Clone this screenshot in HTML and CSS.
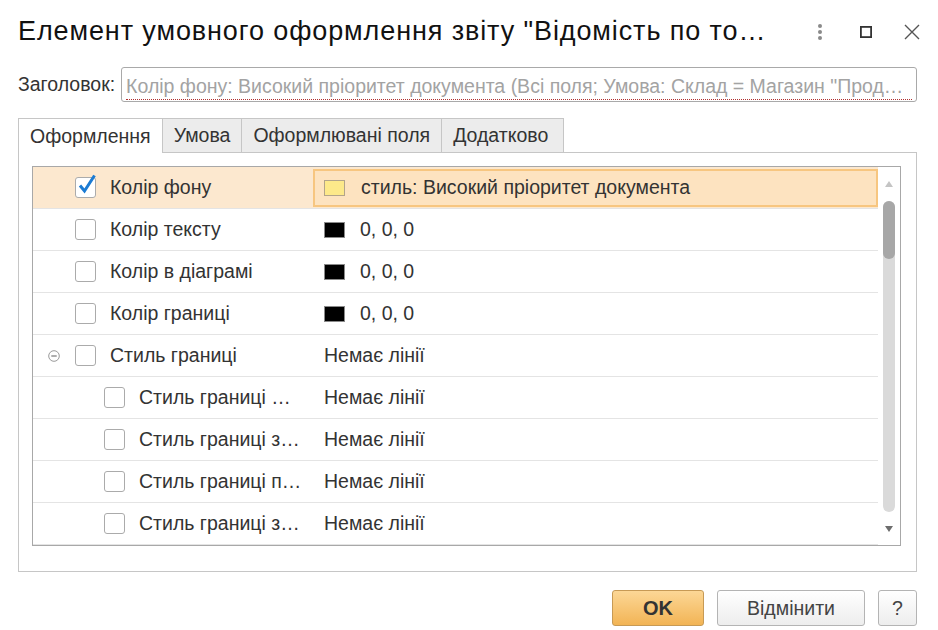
FILE: index.html
```html
<!DOCTYPE html>
<html lang="uk">
<head>
    <meta charset="UTF-8">
    <meta name="viewport" content="width=device-width, initial-scale=1.0">
    <title>Елемент умовного оформлення</title>
    <link rel="stylesheet" href="styles.css">
</head>
<body>
    <div class="dialog">
        <!-- Заголовок вікна -->
        <div class="titlebar">
            <h1 class="title">Елемент умовного оформлення звіту "Відомість по то…</h1>
            <div class="window-buttons">
                <span class="win-btn">
                    <svg width="6" height="18" viewBox="0 0 6 18"><circle cx="3" cy="3" r="2" fill="#8a8a8a"/><circle cx="3" cy="9" r="2" fill="#8a8a8a"/><circle cx="3" cy="15" r="2" fill="#8a8a8a"/></svg>
                </span>
                <span class="win-btn">
                    <svg width="12" height="12" viewBox="0 0 12 12"><rect x="0.9" y="0.9" width="10.2" height="10.2" fill="none" stroke="#333" stroke-width="1.8"/></svg>
                </span>
                <span class="win-btn">
                    <svg width="16" height="16" viewBox="0 0 16 16"><path d="M1 1 L15 15 M15 1 L1 15" stroke="#555" stroke-width="1.4"/></svg>
                </span>
            </div>
        </div>

        <div class="caption-row">
            <label class="caption-label">Заголовок:</label>
            <div class="caption-input">
                <span class="caption-text">Колір фону: Високий пріоритет документа (Всі поля; Умова: Склад = Магазин "Прод…</span>
            </div>
        </div>

        <!-- Вкладки -->
        <div class="tabs">
            <div class="tab active">Оформлення</div>
            <div class="tab">Умова</div>
            <div class="tab">Оформлювані поля</div>
            <div class="tab">Додатково</div>
        </div>

        <div class="tab-panel">
            <div class="grid">
                <div class="rows">
                    <div class="row current">
                        <div class="cell-name">
                            <span class="toggle"></span>
                            <span class="checkbox checked">
                                <svg width="24" height="24" viewBox="0 0 24 24"><path d="M5 11.5 L9.5 17 L19.5 1.5" fill="none" stroke="#1b7bd3" stroke-width="3"/></svg>
                            </span>
                            <span class="name-text">Колір фону</span>
                        </div>
                        <div class="cell-value selected">
                            <span class="swatch yellow"></span>стиль: Високий пріоритет документа
                        </div>
                    </div>
                    <div class="row">
                        <div class="cell-name">
                            <span class="toggle"></span>
                            <span class="checkbox"></span>
                            <span class="name-text">Колір тексту</span>
                        </div>
                        <div class="cell-value"><span class="swatch"></span>0, 0, 0</div>
                    </div>
                    <div class="row">
                        <div class="cell-name">
                            <span class="toggle"></span>
                            <span class="checkbox"></span>
                            <span class="name-text">Колір в діаграмі</span>
                        </div>
                        <div class="cell-value"><span class="swatch"></span>0, 0, 0</div>
                    </div>
                    <div class="row">
                        <div class="cell-name">
                            <span class="toggle"></span>
                            <span class="checkbox"></span>
                            <span class="name-text">Колір границі</span>
                        </div>
                        <div class="cell-value"><span class="swatch"></span>0, 0, 0</div>
                    </div>
                    <div class="row">
                        <div class="cell-name">
                            <span class="toggle">
                                <svg width="12" height="12" viewBox="0 0 12 12"><circle cx="6" cy="6" r="5.3" fill="none" stroke="#9a9a9a" stroke-width="1"/><path d="M3.3 6 H8.7" stroke="#777" stroke-width="1.2"/></svg>
                            </span>
                            <span class="checkbox"></span>
                            <span class="name-text">Стиль границі</span>
                        </div>
                        <div class="cell-value">Немає лінії</div>
                    </div>
                    <div class="row sub">
                        <div class="cell-name">
                            <span class="toggle"></span>
                            <span class="checkbox"></span>
                            <span class="name-text">Стиль границі …</span>
                        </div>
                        <div class="cell-value">Немає лінії</div>
                    </div>
                    <div class="row sub">
                        <div class="cell-name">
                            <span class="toggle"></span>
                            <span class="checkbox"></span>
                            <span class="name-text">Стиль границі з…</span>
                        </div>
                        <div class="cell-value">Немає лінії</div>
                    </div>
                    <div class="row sub">
                        <div class="cell-name">
                            <span class="toggle"></span>
                            <span class="checkbox"></span>
                            <span class="name-text">Стиль границі п…</span>
                        </div>
                        <div class="cell-value">Немає лінії</div>
                    </div>
                    <div class="row sub">
                        <div class="cell-name">
                            <span class="toggle"></span>
                            <span class="checkbox"></span>
                            <span class="name-text">Стиль границі з…</span>
                        </div>
                        <div class="cell-value">Немає лінії</div>
                    </div>
                </div>
                <!-- Смуга прокрутки -->
                <div class="scrollbar">
                    <div class="scroll-arrow up"></div>
                    <div class="scroll-track"><div class="scroll-thumb"></div></div>
                    <div class="scroll-arrow down"></div>
                </div>
            </div>
        </div>

        <div class="footer">
            <button class="btn btn-default">OK</button>
            <button class="btn btn-cancel">Відмінити</button>
            <button class="btn btn-help">?</button>
        </div>
    </div>
</body>
</html>
```

FILE: styles.css
```css
body {
    margin: 0;
    background-color: #fff;
    font-family: 'Liberation Sans', Arial, sans-serif;
    font-size: 19.5px;
    color: #333;
}
.dialog {
    width: 938px;
    height: 630px;
    padding: 0 21px 0 18px;
    box-sizing: border-box;
}

/* Title bar */
.titlebar {
    height: 64px;
    display: flex;
    align-items: center;
    margin-right: -7px;
}
.title {
    margin: 0;
    font-size: 27px;
    letter-spacing: 0.9px;
    font-weight: normal;
    color: #111;
    white-space: nowrap;
    padding-bottom: 2px;
}
.window-buttons {
    margin-left: auto;
    display: flex;
    gap: 22px;
}
.win-btn {
    width: 24px;
    height: 24px;
    display: flex;
    align-items: center;
    justify-content: center;
}

/* Caption field */
.caption-row {
    display: flex;
    align-items: center;
    margin-top: 3px;
    gap: 6px;
}
.caption-label {
    color: #333;
}
.caption-input {
    flex: 1;
    height: 35px;
    border: 1px solid #a9a9a9;
    border-radius: 3px;
    box-sizing: border-box;
    padding: 0 4px;
    display: flex;
    align-items: center;
    overflow: hidden;
}
.caption-text {
    flex: 1;
    color: #a3a3a3;
    white-space: nowrap;
    overflow: hidden;
    line-height: 26px;
    border-bottom: 1px dotted #b03030;
    margin-top: 4px;
}

/* Tabs */
.tabs {
    display: flex;
    margin-top: 16px;
    margin-bottom: -1px;
}
.tab {
    height: 33px;
    padding: 0 11px;
    display: flex;
    align-items: center;
    border: 1px solid #c6c6c6;
    border-bottom: none;
    background-color: #ececec;
    margin-left: -1px;
    color: #333;
}
.tab:first-child {
    margin-left: 0;
}
.tab:last-child {
    padding-right: 15px;
}
.tab.active {
    background-color: #fff;
    height: 34px;
    position: relative;
    z-index: 1;
}

.tab-panel {
    border: 1px solid #c6c6c6;
    padding: 13px 15px 25px 13px;
}

/* Grid */
.grid {
    border: 1px solid #a8a8a8;
    display: flex;
    height: 378px;
    overflow: hidden;
}
.rows {
    flex: 1;
}
.row {
    height: 41px;
    border-bottom: 1px solid #e4e4e4;
    display: flex;
    align-items: center;
}
.row.current {
    background-color: #fce8cf;
}
.cell-name {
    width: 280px;
    flex-shrink: 0;
    display: flex;
    align-items: center;
    padding-left: 15px;
    box-sizing: border-box;
    white-space: nowrap;
}
.row.sub .cell-name {
    padding-left: 44px;
}
.toggle {
    width: 12px;
    height: 12px;
    display: flex;
    margin-right: 15px;
}
.checkbox {
    width: 21px;
    height: 21px;
    border: 1px solid #ababab;
    border-radius: 3px;
    box-sizing: border-box;
    background-color: #fff;
    margin-right: 14px;
    flex-shrink: 0;
    position: relative;
}
.checkbox svg {
    position: absolute;
    left: -1px;
    top: -4px;
}
.cell-value {
    flex: 1;
    display: flex;
    align-items: center;
    padding-left: 11px;
    white-space: nowrap;
}
.cell-value.selected {
    height: 38px;
    box-sizing: border-box;
    border: 2px solid #f7c680;
    background-color: #fde3c0;
    padding-left: 9px;
}
.swatch {
    width: 21px;
    height: 16px;
    box-sizing: border-box;
    border: 1px solid #8a8a8a;
    background-color: #000;
    margin-right: 15px;
}
.swatch.yellow {
    background-color: #fde98a;
    border-color: #b3a48a;
    margin-right: 16px;
}

/* Scrollbar */
.scrollbar {
    width: 22px;
    display: flex;
    flex-direction: column;
    align-items: center;
}
.scroll-arrow {
    display: flex;
    align-items: center;
    justify-content: center;
    width: 100%;
}
.scroll-arrow.up {
    height: 34px;
}
.scroll-arrow.down {
    flex: 1;
}
.scroll-arrow.up::before {
    content: "";
    border-left: 4px solid transparent;
    border-right: 4px solid transparent;
    border-bottom: 6px solid #c4c4c4;
}
.scroll-arrow.down::before {
    content: "";
    border-left: 4px solid transparent;
    border-right: 4px solid transparent;
    border-top: 6px solid #6d6d6d;
}
.scroll-track {
    width: 12px;
    height: 311px;
    background-color: #dadada;
    border-radius: 6px;
}
.scroll-thumb {
    height: 58px;
    background-color: #a7a7a7;
    border-radius: 6px;
}

/* Buttons */
.footer {
    display: flex;
    justify-content: flex-end;
    gap: 13px;
    margin-top: 18px;
}
.btn {
    height: 36px;
    font-family: 'Liberation Sans', Arial, sans-serif;
    font-size: 19.5px;
    color: #444;
    border-radius: 3px;
    padding: 0;
    cursor: pointer;
}
.btn-default {
    width: 92px;
    font-size: 20px;
    font-weight: bold;
    color: #333;
    background: linear-gradient(#fcd796, #f2b455);
    border: 1px solid #c79a55;
}
.btn-cancel {
    width: 148px;
    background: linear-gradient(#ffffff, #ededed);
    border: 1px solid #b4b4b4;
}
.btn-help {
    width: 39px;
    background: linear-gradient(#ffffff, #ededed);
    border: 1px solid #b4b4b4;
}
```
